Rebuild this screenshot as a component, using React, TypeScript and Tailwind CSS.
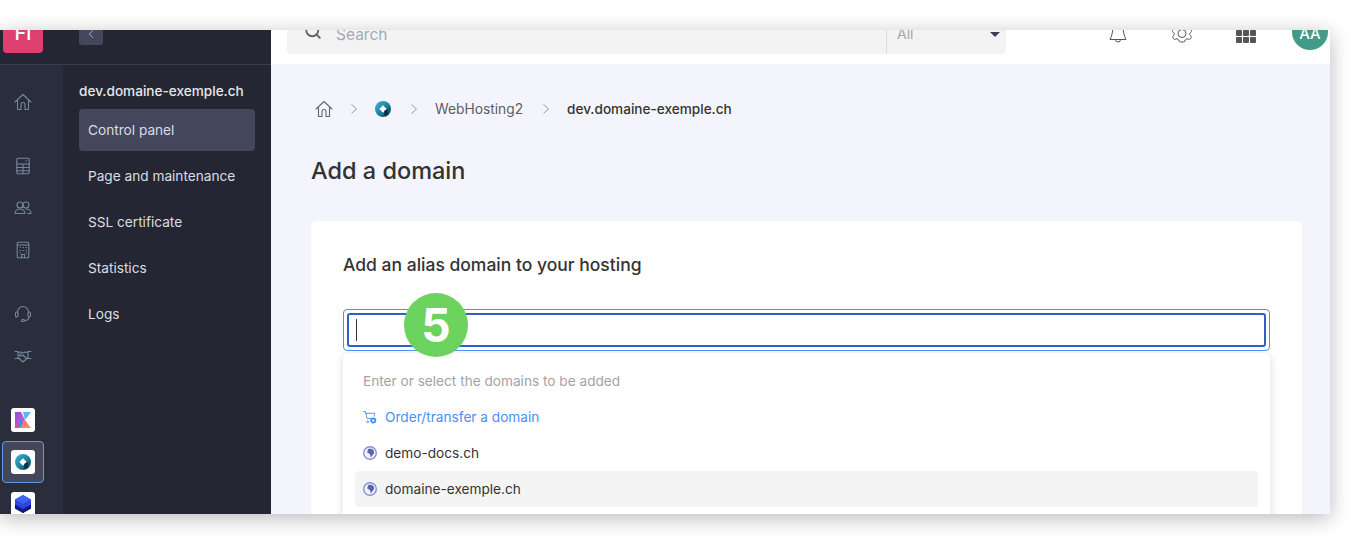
import { ChevronLeft, Search } from 'lucide-react'

const font = { fontFamily: 'Inter, "Liberation Sans", sans-serif' }

const IconHosting = ({ size = 16 }: { size?: number }) => (
  <svg width={size} height={size} viewBox="0 0 24 24">
    <defs>
      <linearGradient id="hostingRing" x1="0" y1="0" x2="1" y2="1">
        <stop offset="0" stopColor="#3fb7d6" />
        <stop offset="0.55" stopColor="#1c7f9c" />
        <stop offset="1" stopColor="#0c2d44" />
      </linearGradient>
    </defs>
    <circle cx="12" cy="12" r="12" fill="url(#hostingRing)" />
    <path d="M12 6.500 17.500 12 12 17.500 6.500 12Z" fill="#fff" />
    <path d="M14 14.500 19 12v8.500L14 22Z" fill="#0c2d44" />
  </svg>
)

const IconK = () => (
  <svg width="16" height="16" viewBox="0 0 16 16">
    <defs>
      <linearGradient id="kPink" x1="0" y1="0" x2="1" y2="1">
        <stop offset="0" stopColor="#8b4fe0" />
        <stop offset="1" stopColor="#ee5aa0" />
      </linearGradient>
      <linearGradient id="kOrange" x1="0" y1="0" x2="1" y2="1">
        <stop offset="0" stopColor="#f45d8c" />
        <stop offset="1" stopColor="#fca04f" />
      </linearGradient>
    </defs>
    <path d="M0 0h6l4 8-5 8H0Z" fill="url(#kPink)" />
    <path d="M5 16 10 8l6 8Z" fill="url(#kOrange)" />
    <path d="M8 0h8l-6 8Z" fill="#57b8f4" />
    <path d="M5 6l3 5-3 5Z" fill="#3d8fe8" />
  </svg>
)

const IconCube = () => (
  <svg width="16" height="18" viewBox="0 0 16 18">
    <path d="M8 0 16 4.500v9L8 18 0 13.500v-9Z" fill="#2c46e0" />
    <path d="M0 4.500 8 9l8-4.500L8 0Z" fill="#3f62f2" />
    <path d="M0 9.500 8 14l8-4.500v4L8 18l-8-4.500Z" fill="#10197f" />
  </svg>
)

const railStroke = {
  fill: 'none',
  stroke: '#77879b',
  strokeWidth: 1.1,
  strokeLinecap: 'round' as const,
  strokeLinejoin: 'round' as const,
}

const IconHome = ({ color = '#77879b' }: { color?: string }) => (
  <svg width="18" height="18" viewBox="0 0 18 18" fill="none" stroke={color} strokeWidth="1.100" strokeLinejoin="round" strokeLinecap="round">
    <path d="M1 9 9 1.500 17 9M3.500 7.500V16.500H7V11.500a2 2 0 0 1 4 0V16.500h3.500V7.500" />
  </svg>
)

const IconCalc = () => (
  <svg width="16" height="18" viewBox="0 0 16 18" {...railStroke}>
    <rect x="1.800" y="1.200" width="12.400" height="15.600" rx="1.200" />
    <path d="M1.800 7h12.400M8 7v9.800M1.800 10.500h12.400M1.800 13.800h12.400M11 3.800h.5" />
  </svg>
)

const IconUsers = () => (
  <svg width="18" height="16" viewBox="0 0 18 16" {...railStroke}>
    <circle cx="6" cy="5" r="3" />
    <circle cx="12" cy="5" r="3" />
    <path d="M1 13.500c0-2.500 2-4.500 5-4.500s5 2 5 4.500ZM12 9c3 0 5 2 5 4.500h-3.500" />
  </svg>
)

const IconBuilding = () => (
  <svg width="14" height="18" viewBox="0 0 14 18" {...railStroke}>
    <rect x="1.200" y="1.200" width="11.600" height="15.600" rx="1" />
    <path d="M1.200 4h11.600M4 6.500h.5M7 6.500h.5M10 6.500h.5M4 9.500h.5M7 9.500h.5M10 9.500h.5M4 12h.5M10 12h.5M5.500 16.500v-3h3v3" />
  </svg>
)

const IconHeadset = () => (
  <svg width="18" height="18" viewBox="0 0 18 18" {...railStroke}>
    <path d="M3.500 8V7a5.500 5.500 0 0 1 11 0v1" />
    <rect x="1.500" y="7" width="2.500" height="5" rx="1.200" />
    <rect x="14" y="7" width="2.500" height="5" rx="1.200" />
    <path d="M15 12c0 2.500-2 3.500-4.500 3.500" />
    <rect x="7.500" y="14.500" width="3" height="2" rx="1" />
  </svg>
)

const IconHandshake = () => (
  <svg width="18" height="14" viewBox="0 0 18 14" {...railStroke}>
    <path d="M1 2.500h3v7H1M17 2.500h-3v7h3M4 3.500 7 3l2 1 2-1 3 .5M4 8.500l5 4.500 5-4.500M7 4.500 5.500 6.500c1 1 2.500.5 3.500-.5l3 3" />
  </svg>
)

const IconGlobe = () => (
  <svg width="14" height="14" viewBox="0 0 14 14" className="shrink-0">
    <circle cx="7" cy="7" r="7" fill="#8890d8" />
    <circle cx="7" cy="7" r="5.600" fill="#f0f1fb" />
    <path d="M5 3.200C7 2.400 9.500 2.800 10.800 4.500L11 7.300 9 9.800 7.800 11.600 7.200 8.800 5.800 7.300 4.200 6.400Z" fill="#5a64a8" />
  </svg>
)

const IconCart = () => (
  <svg width="14" height="15" viewBox="0 0 15 15" fill="none" stroke="#4a90f5" strokeWidth="1" className="shrink-0">
    <path d="M.8 1.200h1.800l1.700 7.300h5" strokeLinecap="round" />
    <path d="M3 3h9.500L12 6" strokeLinecap="round" />
    <circle cx="5" cy="12" r="1" />
    <circle cx="11" cy="10.800" r="3.200" fill="#4a90f5" stroke="none" />
    <circle cx="11" cy="10.800" r="1.200" fill="#fff" stroke="none" />
  </svg>
)

const IconBell = () => (
  <svg className="-mt-[7px] ml-[102px] shrink-0" width="20" height="20" viewBox="0 0 20 20" fill="none" stroke="#555" strokeWidth="1">
    <path d="M5 1C5 8 4 13 2 16.500H18C16 13 15 8 15 1M7.500 16.500a2.500 2.500 0 0 0 5 0" />
  </svg>
)

const IconGear = () => (
  <svg className="-mt-[9px] ml-[43px] shrink-0" width="22" height="24" viewBox="0 0 22 24" fill="none" stroke="#555" strokeWidth="1">
    <circle cx="11" cy="12.500" r="4" />
    <path d="M3 8C1 9 1 11 3 12 4 13 3 14 2 15 1 17 3 19 5 18 6.500 17.500 7.500 18 8 20 9 21.500 13 21.500 14 20 14.500 18 15.500 17.500 17 18 19 19 21 17 20 15 19 14 18 13 19 12 21 11 21 9 19 8" />
  </svg>
)

const Crumb = ({ className }: { className: string }) => (
  <svg className={`shrink-0 ${className}`} width="6" height="10" viewBox="0 0 6 10" fill="none" stroke="#999" strokeWidth="1">
    <path d="M.5.5 5.500 5 .5 9.500" />
  </svg>
)

const RailIcon = ({ children, className = '' }: { children: React.ReactNode; className?: string }) => (
  <div className={`flex h-5 w-[46px] shrink-0 items-center justify-center ${className}`}>{children}</div>
)

const AppTile = ({ children }: { children: React.ReactNode }) => (
  <span className="flex h-6 w-6 shrink-0 items-center justify-center rounded-[3px] bg-white">{children}</span>
)

const menu = ['Control panel', 'Page and maintenance', 'SSL certificate', 'Statistics', 'Logs']

const Sidebar = () => (
  <aside className="flex h-full w-[271px] shrink-0 flex-col bg-[#242733]">
    <div className="flex h-[35px] shrink-0 border-b border-[#3b3e52]">
      <div className="h-full w-[63px] shrink-0 pl-[3px]">
        <div className="flex h-[23px] w-10 items-end justify-center rounded-b-[4px] bg-[#dd3f6f] pb-[10px] text-[20px] leading-5 font-medium text-white">
          Fl
        </div>
      </div>
      <div className="pl-4">
        <span className="flex h-[15px] w-6 items-start justify-center rounded-b-[3px] bg-[#44465c]">
          <ChevronLeft className="-mt-[3px]" size={14} color="#d0d2dc" strokeWidth={1.3} />
        </span>
      </div>
    </div>
    <div className="flex min-h-0 flex-1">
      <div className="flex w-[63px] shrink-0 flex-col bg-[#2a2e3c] pt-[27px]">
        <RailIcon>
          <IconHome />
        </RailIcon>
        <RailIcon className="mt-[44px]">
          <IconCalc />
        </RailIcon>
        <RailIcon className="mt-[22px]">
          <IconUsers />
        </RailIcon>
        <RailIcon className="mt-[22px]">
          <IconBuilding />
        </RailIcon>
        <RailIcon className="mt-[44px]">
          <IconHeadset />
        </RailIcon>
        <RailIcon className="mt-[22px]">
          <IconHandshake />
        </RailIcon>
        <div className="mt-[42px] flex w-[46px] shrink-0 flex-col items-center">
          <AppTile>
            <IconK />
          </AppTile>
          <span className="mt-[9px] flex h-[42px] w-[42px] shrink-0 items-center justify-center rounded-[4px] border border-[#5b9be8] bg-[#44465c]">
            <AppTile>
              <IconHosting />
            </AppTile>
          </span>
          <span className="mt-[9px]">
            <AppTile>
              <IconCube />
            </AppTile>
          </span>
        </div>
      </div>
      <nav className="min-w-0 flex-1 px-4 pt-[17px]">
        <h2 className="text-[13.6px] leading-[18px] font-medium text-[#e6e7ec]">dev.domaine-exemple.ch</h2>
        <ul className="mt-[9px] flex flex-col gap-1">
          {menu.map((item, index) => (
            <li
              className={`flex h-[42px] items-center rounded-[4px] px-[9px] text-[13.65px] text-[#dcdde3] ${
                index === 0 ? 'bg-[#44465c]' : ''
              }`}
              key={item}
            >
              {item}
            </li>
          ))}
        </ul>
      </nav>
    </div>
  </aside>
)

const TopBar = () => (
  <header className="flex h-[34px] shrink-0 items-start bg-white pl-[16px]">
    <div className="flex h-6 w-[719px] items-start rounded-b-[4px] bg-[#f3f3f3]">
      <Search className="-mt-[8px] ml-[17px] shrink-0" size={18} color="#666" strokeWidth={2.5} />
      <span className="-mt-[5px] ml-[14px] flex-1 text-[15.5px] leading-5 text-[#a7a9b5]">Search</span>
      <div className="flex h-full w-[120px] items-start justify-between border-l border-[#dcdcdc] pr-[6px] pl-[10px]">
        <span className="-mt-[6px] text-sm leading-5 text-[#a6a6a6]">All</span>
        <span className="mt-[2px] h-0 w-0 border-x-[5px] border-t-[5px] border-x-transparent border-t-[#3c4050]" />
      </div>
    </div>
    <div className="flex flex-1 items-start">
      <IconBell />
      <IconGear />
      <div className="ml-[43px] grid shrink-0 grid-cols-3 gap-[1px]">
        {[0, 1, 2, 3, 4, 5].map((dot) => (
          <span className="h-[6px] w-[6px] rounded-[1px] bg-[#555]" key={dot} />
        ))}
      </div>
      <div className="-mt-[16px] ml-[36px] flex h-[36px] w-[36px] shrink-0 items-center justify-center rounded-full bg-[#429a88] pt-[3px] text-[15px] leading-none font-medium text-white">
        AA
      </div>
    </div>
  </header>
)

const App = () => (
  <div className="h-[544px] w-[1360px] overflow-hidden bg-white pt-[30px]" style={font}>
    <div className="flex h-[484px] w-[1330px] overflow-hidden shadow-[0_4px_20px_rgba(0,0,0,0.28)]">
      <Sidebar />
      <main className="flex min-w-0 flex-1 flex-col bg-[#f4f5fc]">
        <TopBar />
        <div className="min-h-0 flex-1 pt-[35px] pr-7 pl-10">
          <div className="flex h-5 items-center text-[13.8px] text-[#5d5d63]">
            <span className="ml-[4px] flex">
              <IconHome color="#666" />
            </span>
            <Crumb className="ml-[18px]" />
            <span className="ml-[18px] flex">
              <IconHosting />
            </span>
            <Crumb className="ml-[20px]" />
            <span className="ml-[18px] w-[88px] whitespace-nowrap">WebHosting2</span>
            <Crumb className="ml-[20px]" />
            <span className="ml-[18px] text-[13.6px] font-medium text-[#333]">dev.domaine-exemple.ch</span>
          </div>
          <h1 className="mt-[36px] text-[23.5px] leading-[32px] font-medium text-[#333]">Add a domain</h1>
          <section className="mt-[34px] h-[400px] rounded-t-[6px] bg-white px-8 pt-[33px]">
            <h2 className="text-[17.5px] leading-[22px] font-medium text-[#333]">Add an alias domain to your hosting</h2>
            <div className="relative mt-[33px] rounded-[4px] border border-[#4a90f5] p-[3px]">
              <div className="flex h-[34px] items-center rounded-[3px] border-2 border-[#2f5fc8] bg-white pl-[7px]">
                <span className="h-[22px] w-px bg-[#333]" />
              </div>
              <div className="absolute -top-[17px] left-[60px] flex h-16 w-16 items-center justify-center rounded-full bg-[#6dd35f] text-[46px] leading-none font-bold text-white">
                5
              </div>
            </div>
            <div className="mt-[2px] h-[200px] rounded-[6px] bg-white px-3 pt-[10px] shadow-[0_2px_10px_rgba(0,0,0,0.15)]">
              <p className="flex h-9 items-center pl-2 text-[13.65px] text-[#a3a3a3]">Enter or select the domains to be added</p>
              <div className="flex h-9 items-center gap-2 pl-2 text-[13.65px] text-[#4a90f5]">
                <IconCart />
                Order/transfer a domain
              </div>
              <div className="flex h-9 items-center gap-2 pl-2 text-[13.65px] text-[#333]">
                <IconGlobe />
                demo-docs.ch
              </div>
              <div className="flex h-9 items-center gap-2 rounded-[4px] bg-[#f4f4f4] pl-2 text-[13.65px] text-[#333]">
                <IconGlobe />
                domaine-exemple.ch
              </div>
            </div>
          </section>
        </div>
      </main>
    </div>
  </div>
)

export default App
